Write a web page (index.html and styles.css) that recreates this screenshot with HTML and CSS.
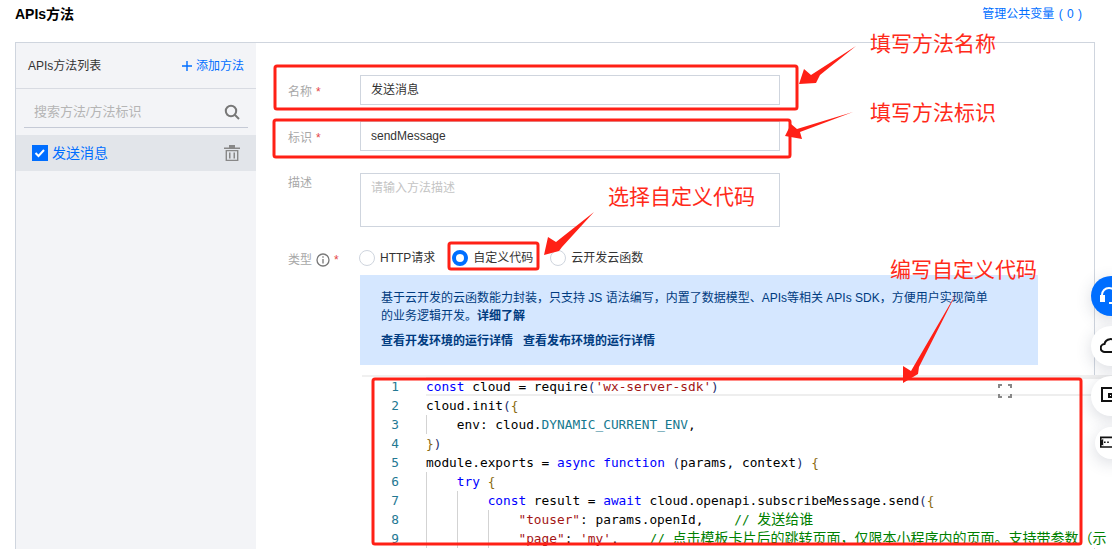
FILE: index.html
```html
<!DOCTYPE html>
<html lang="zh-CN">
<head>
<meta charset="utf-8">
<title>APIs方法</title>
<link rel="stylesheet" href="styles.css">
</head>
<body>
<div class="page">
  <header class="top">
    <h1 class="title">APIs方法</h1>
    <a class="vars">管理公共变量 ( 0 )</a>
  </header>
  <section class="panel">
    <aside class="side">
      <div class="side-head">
        <span>APIs方法列表</span>
        <a class="add"><svg class="plus" viewBox="0 0 10 10"><path d="M5 0v10M0 5h10"/></svg>添加方法</a>
      </div>
      <div class="search">
        <span class="search-text">搜索方法/方法标识</span>
        <svg class="search-icon" viewBox="0 0 16 16"><circle cx="7" cy="7" r="5.2"/><path d="M11 11l4 4"/></svg>
      </div>
      <div class="item">
        <span class="check"><svg viewBox="0 0 16 16"><path d="M3.5 8l3 3 5.500-6"/></svg></span>
        <span class="item-name">发送消息</span>
        <svg class="trash" viewBox="0 0 16 16"><path d="M0 2.500h16v1.400H0zM5 0h6v2.500H5zM1.600 5H14.400v11H1.600zM3 6.200v8.600h10V6.200zM5 7.500h1.500v6H5zM9.500 7.500H11v6H9.500z" fill-rule="evenodd"/></svg>
      </div>
    </aside>
    <main class="form">
      <div class="row row-name">
        <label class="label">名称<i class="req">*</i></label>
        <div class="input">发送消息</div>
      </div>
      <div class="row row-id">
        <label class="label">标识<i class="req">*</i></label>
        <div class="input">sendMessage</div>
      </div>
      <div class="row row-desc">
        <label class="label">描述</label>
        <div class="textarea">请输入方法描述</div>
      </div>
      <div class="row row-type">
        <label class="label">类型<svg class="info" viewBox="0 0 14 14"><circle cx="7" cy="7" r="6"/><path d="M7 6v4.500M7 3.200v1.600"/></svg><i class="req">*</i></label>
        <div class="radios">
          <span class="radio radio-http"><b class="dot"></b>HTTP请求</span>
          <span class="radio radio-code"><b class="dot on"></b>自定义代码</span>
          <span class="radio"><b class="dot"></b>云开发云函数</span>
        </div>
      </div>
      <div class="notice">
        <p class="notice-text">基于云开发的云函数能力封装，只支持 JS 语法编写，内置了数据模型、APIs等相关 APIs SDK，方便用户实现简单<br>的业务逻辑开发。<b>详细了解</b></p>
        <p class="notice-links"><b>查看开发环境的运行详情</b><b>查看发布环境的运行详情</b></p>
      </div>
      <div class="editor">
        <svg class="full" viewBox="0 0 14 14"><path d="M1 4V1h3M10 1h3v3M13 10v3h-3M4 13H1v-3"/></svg>
        <div class="ln cur"><span class="no">1</span><code class="code"><span class="kw">const</span> cloud = require<span class="b1">(</span><span class="str">'wx-server-sdk'</span><span class="b1">)</span></code></div>
        <div class="ln"><span class="no">2</span><code class="code">cloud.init<span class="b1">(</span><span class="b2">{</span></code></div>
        <div class="ln"><span class="no">3</span><code class="code"><span class="ind"></span>env: cloud.<span class="cst">DYNAMIC_CURRENT_ENV</span>,</code></div>
        <div class="ln"><span class="no">4</span><code class="code"><span class="b2">}</span><span class="b1">)</span></code></div>
        <div class="ln"><span class="no">5</span><code class="code">module.exports = <span class="kw">async</span> <span class="kw">function</span> <span class="b1">(</span>params, context<span class="b1">)</span> <span class="b2">{</span></code></div>
        <div class="ln"><span class="no">6</span><code class="code"><span class="ind"></span><span class="kw">try</span> <span class="b2">{</span></code></div>
        <div class="ln"><span class="no">7</span><code class="code"><span class="ind"></span><span class="ind"></span><span class="kw">const</span> result = <span class="kw">await</span> cloud.openapi.subscribeMessage.send<span class="b1">(</span><span class="b2">{</span></code></div>
        <div class="ln"><span class="no">8</span><code class="code"><span class="ind"></span><span class="ind"></span><span class="ind"></span><span class="str">"touser"</span>: params.openId,    <span class="cm">// <span class="zh">发送给谁</span></span></code></div>
        <div class="ln"><span class="no">9</span><code class="code"><span class="ind"></span><span class="ind"></span><span class="ind"></span><span class="str">"page"</span>: <span class="str">'my'</span>,    <span class="cm">// <span class="zh">点击模板卡片后的跳转页面，仅限本小程序内的页面。支持带参数（示</span></span></code></div>
      </div>
    </main>
  </section>
</div>

<div class="dock dock-help"><svg viewBox="0 0 20 20"><path d="M2 13V9a7 7 0 0 1 14 0M9 17h6"/><path d="M1 10h3v5H1z" class="fill"/></svg></div>
<div class="dock dock-cloud"><svg viewBox="0 0 20 20"><path d="M6 16H5a4 4 0 0 1-.5-8A6 6 0 0 1 16 7a4.500 4.500 0 0 1 4 4.500V16z"/></svg></div>
<div class="dock dock-book"><svg viewBox="0 0 20 20"><path d="M2 2h16v15l-4-2H2z"/><path d="M9 8h3v3H9z"/></svg></div>
<div class="dock dock-mail"><svg viewBox="0 0 20 20"><path d="M1 3h18v12H1zM1 9l2-2v4zM5 9h2M9 9h2"/></svg></div>

<svg class="marks" viewBox="0 0 1112 549">
  <rect x="275" y="66" width="522" height="43" rx="2"/>
  <rect x="274" y="120" width="516" height="37" rx="2"/>
  <rect x="449" y="243" width="89" height="26" rx="2"/>
  <rect x="373" y="379" width="708" height="165" rx="2"/>
  <polygon points="799,84 804,69 811,75 856,46 820,75 816,83"/>
  <polygon points="785,136 791,124 797,129 853,112 800,132 802,139"/>
  <polygon points="544,255 548,237 556,242 594,212 562,247 559,251"/>
  <polygon points="903,383 903,366 911,371 957,292 919,367 918,374"/>
</svg>
<div class="note note-1">填写方法名称</div>
<div class="note note-2">填写方法标识</div>
<div class="note note-3">选择自定义代码</div>
<div class="note note-4">编写自定义代码</div>
</body>
</html>
```

FILE: styles.css
```css
* { box-sizing: border-box; }
html, body { margin: 0; height: 549px; overflow: hidden; background: #fff; }
body { position: relative; font: 12px/18px "Liberation Sans", "Noto Sans CJK SC", sans-serif; color: #333; }
p, h1 { margin: 0; }
i { font-style: normal; }

.page { padding: 0 17px 0 15px; }
.top { height: 42px; display: flex; justify-content: space-between; padding-top: 5px; }
.title { font-size: 14px; line-height: 18px; font-weight: 700; color: #000; }
.vars { color: #006eff; padding-right: 13px; word-spacing: 1px; }

.panel { display: flex; height: 700px; border: 1px solid #cfd5de; }
.side { width: 240px; flex: none; background: #f3f4f7; }
.side-head { height: 46px; display: flex; justify-content: space-between; align-items: center; padding: 0 12px; border-bottom: 1px solid #d8dbe2; }
.add { display: flex; align-items: center; color: #006eff; }
.plus { width: 10px; height: 10px; margin-right: 4px; fill: none; stroke: #006eff; stroke-width: 1.4; }
.search { margin: 0 8px 7px; height: 39px; display: flex; justify-content: space-between; align-items: center; padding: 7px 8px 0 10px; border-bottom: 1px solid #c5cad6; }
.search-text { font-size: 13px; color: #b5b5b5; }
.search-icon { width: 16px; height: 16px; fill: none; stroke: #777; stroke-width: 2; }
.item { height: 36px; display: flex; align-items: center; background: #e2e5ea; padding: 0 16px; }
.check { width: 16px; height: 16px; background: #006eff; margin-right: 4px; }
.check svg { display: block; fill: none; stroke: #fff; stroke-width: 2; }
.item-name { flex: 1; font-size: 14px; color: #006eff; }
.trash { width: 16px; height: 16px; fill: #888; }

.form { flex: 1; min-width: 0; padding: 32px 0 0 32px; }
.row { display: flex; }
.row-id { margin-top: 16px; }
.row-desc { margin-top: 22px; }
.row-type { margin-top: 22px; height: 26px; }
.label { width: 72px; flex: none; color: #a8a8a8; padding-top: 8px; display: flex; align-items: flex-start; }
.row-desc .label { padding-top: 1px; }
.row-type .label { padding-top: 2px; }
.req { color: #e54545; margin-left: 4px; }
.info { width: 14px; height: 14px; margin: 2px 0 0 4px; fill: none; stroke: #777; stroke-width: 1.3; }
.input { width: 420px; height: 30px; border: 1px solid #cfd5de; background: #fff; padding: 0 10px; line-height: 28px; color: #333; }
.textarea { width: 420px; height: 54px; border: 1px solid #cfd5de; padding: 5px 10px; color: #c4c4c4; }
.radios { display: flex; margin-left: -1px; padding-top: 0; }
.radio { display: flex; align-items: center; height: 18px; color: #333; margin-right: 16px; }
.radio-code { margin-right: 17px; margin-left: 1px; }
.dot { width: 16px; height: 16px; border-radius: 50%; border: 1px solid #cfd5de; background: #fff; margin-right: 5px; }
.dot.on { border: 4px solid #006eff; }
.notice { width: 678px; height: 90px; margin-left: 72px; background: #d5e7ff; padding: 14px 21px 0; color: #003b80; }
.notice-links { margin-top: 7px; display: flex; gap: 10px; }
.notice-links b, .notice-text b { font-weight: 700; }

.editor { position: relative; width: 770px; margin: 10px 0 0 74px; border-top: 2px solid #f0f0f0; background: #fff; font: 12.8px/19px "DejaVu Sans Mono", "Noto Sans CJK SC", monospace; }
.ln { display: flex; height: 19px; white-space: pre; }
.no { width: 37px; flex: none; text-align: right; color: #237893; margin-right: 27px; }
.code { flex: 1; font: inherit; color: #000; }
.ln.cur .code { border-top: 2px solid #eee; border-bottom: 2px solid #eee; line-height: 15px; }
.ind { display: inline-block; width: 30.82px; height: 19px; border-left: 1px solid #d3d3d3; vertical-align: top; }
.kw { color: #0000ff; }
.str { color: #a31515; }
.cst { color: #16798f; }
.cm { color: #008000; }
.b1 { color: #1f2f6f; }
.b2 { color: #8a6a10; }
.zh { font-size: 14px; }
.full { position: absolute; left: 636px; top: 7px; width: 14px; height: 14px; fill: none; stroke: #888; stroke-width: 2; }

.dock { position: absolute; width: 40px; height: 40px; left: 1091px; border-radius: 50%; background: #fff; box-shadow: 0 4px 16px rgba(50, 60, 90, .18); display: flex; align-items: center; padding-left: 9px; }
.dock svg { width: 20px; height: 20px; fill: none; stroke: #111; stroke-width: 2; }
.dock-help { top: 276px; background: #006eff; }
.dock-help svg { stroke: #fff; }
.dock-help .fill { fill: #fff; }
.dock-cloud { top: 326px; }
.dock-book { top: 376px; }
.dock-mail { top: 427px; left: 1095px; width: 32px; height: 32px; padding-left: 5px; }
.dock-mail svg { width: 16px; height: 16px; }

.marks { position: absolute; left: 0; top: 0; width: 1112px; height: 549px; pointer-events: none; }
.marks rect { fill: none; stroke: #ff2016; stroke-width: 3; }
.marks polygon { fill: #ff2016; }
.note { position: absolute; font-size: 21px; line-height: 28px; color: #ff2a1a; white-space: nowrap; }
.note-1 { left: 870px; top: 30px; }
.note-2 { left: 870px; top: 99px; }
.note-3 { left: 608px; top: 183px; }
.note-4 { left: 890px; top: 256px; }
```
